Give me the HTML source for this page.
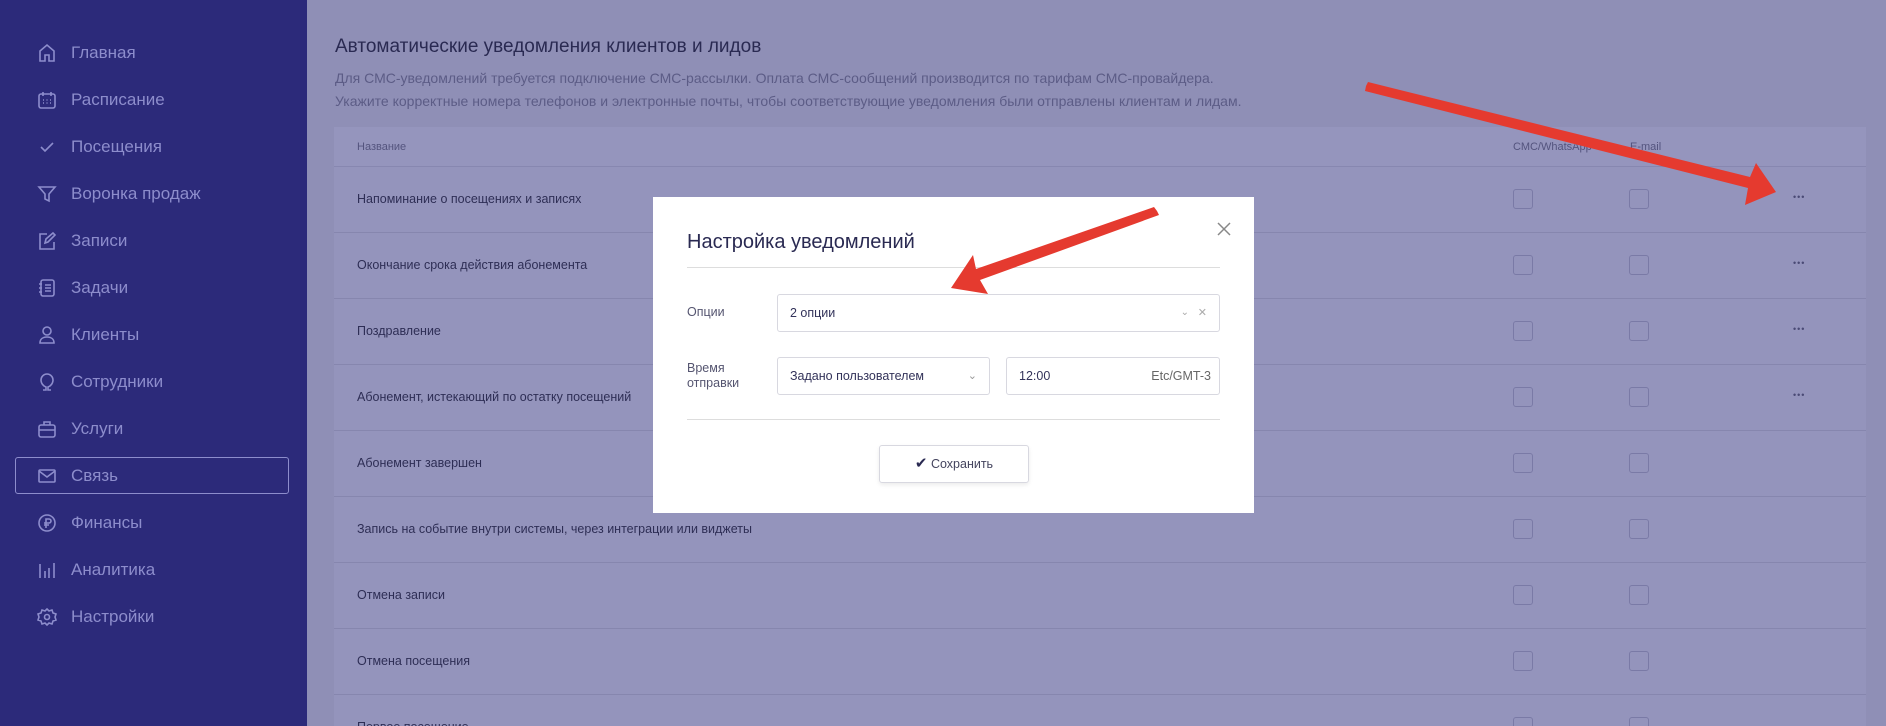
<!DOCTYPE html>
<html><head><meta charset="utf-8"><style>
*{margin:0;padding:0;box-sizing:border-box}
html{width:1886px;height:726px;overflow:hidden}
body{width:1886px;height:726px;overflow:hidden;background:#8f8fb6;font-family:"Liberation Sans","DejaVu Sans",sans-serif;position:relative}
.sb{position:absolute;left:0;top:0;width:307px;height:726px;background:#2c2a7a}
.it{position:absolute;left:0;height:30px;width:307px;color:#8d8dcc;font-size:17px;line-height:30px}
.it span{position:absolute;left:71px}
.it svg{position:absolute;left:37px;top:5px}
.act{position:absolute;left:15px;top:457px;width:274px;height:37px;border:1px solid #8d8dcc;border-radius:3px}
.t1{position:absolute;left:335px;top:36px;font-size:19px;color:#2a2a52}
.d{position:absolute;left:335px;font-size:14px;color:#5c5c86}
.tbl{position:absolute;left:334px;top:127px;width:1532px;height:599px;background:#9494bc;overflow:hidden}
.hd{position:absolute;left:0;top:0;width:1532px;height:40px;background:#9595bd;border-bottom:1px solid #8787b0}
.hd span{position:absolute;top:14px;font-size:11px;color:#54547e}
.row{position:absolute;left:0;width:1532px;height:66px;border-bottom:1px solid #8686ae}
.row .n{position:absolute;left:23px;top:25px;font-size:12.5px;color:#2e2e55}
.cb{position:absolute;top:22px;width:20px;height:20px;border:1px solid #7a7aa6;border-radius:3px}
.dots{position:absolute;left:1459px;top:25px;font-size:9px;color:#4a4a75;letter-spacing:1px}
.modal{position:absolute;left:653px;top:197px;width:601px;height:316px;background:#fff}
.m{position:absolute}
.inp{position:absolute;border:1px solid #d8d8e0;border-radius:3px;height:38px;font-size:12.5px;color:#33335a;line-height:36px;padding-left:12px}
</style></head><body>
<div class="sb">
<div class="act"></div>
<div class="it" style="top:38px"><svg width="20" height="20" viewBox="0 0 20 20" fill="none" stroke="#8d8dcc" stroke-width="1.6"><path d="M3 18V8l7-6 7 6v10h-5v-6H8v6z"/></svg><span>Главная</span></div>
<div class="it" style="top:85px"><svg width="20" height="20" viewBox="0 0 20 20" fill="none" stroke="#8d8dcc" stroke-width="1.6"><rect x="2" y="4" width="16" height="14" rx="2"/><path d="M6 2v4M14 2v4M6 10h1M9.5 10h1M13 10h1M6 13h1M9.5 13h1M13 13h1"/></svg><span>Расписание</span></div>
<div class="it" style="top:132px"><svg width="20" height="20" viewBox="0 0 20 20" fill="none" stroke="#8d8dcc" stroke-width="1.6"><path d="M4 10l4 4 8-8"/></svg><span>Посещения</span></div>
<div class="it" style="top:179px"><svg width="20" height="20" viewBox="0 0 20 20" fill="none" stroke="#8d8dcc" stroke-width="1.6"><path d="M2 3h16l-6 7v7l-4-2v-5z"/></svg><span>Воронка продаж</span></div>
<div class="it" style="top:226px"><svg width="20" height="20" viewBox="0 0 20 20" fill="none" stroke="#8d8dcc" stroke-width="1.6"><path d="M10 3H3v15h14v-7M8 12l1-4 7-6 2 2-7 7z"/></svg><span>Записи</span></div>
<div class="it" style="top:273px"><svg width="20" height="20" viewBox="0 0 20 20" fill="none" stroke="#8d8dcc" stroke-width="1.6"><rect x="4" y="2" width="13" height="16" rx="2"/><path d="M2 6h3M2 10h3M2 14h3M8 7h6M8 10h6M8 13h6"/></svg><span>Задачи</span></div>
<div class="it" style="top:320px"><svg width="20" height="20" viewBox="0 0 20 20" fill="none" stroke="#8d8dcc" stroke-width="1.6"><circle cx="10" cy="6" r="4"/><path d="M3 18c0-4 3-6 7-6s7 2 7 6z"/></svg><span>Клиенты</span></div>
<div class="it" style="top:367px"><svg width="20" height="20" viewBox="0 0 20 20" fill="none" stroke="#8d8dcc" stroke-width="1.6"><path d="M6 18h3v-3c-3-1-5-4-5-7a6 6 0 0112 0c0 3-2 6-5 7v3h3"/></svg><span>Сотрудники</span></div>
<div class="it" style="top:414px"><svg width="20" height="20" viewBox="0 0 20 20" fill="none" stroke="#8d8dcc" stroke-width="1.6"><rect x="2" y="6" width="16" height="12" rx="2"/><path d="M7 6V3h6v3M2 11h16"/></svg><span>Услуги</span></div>
<div class="it" style="top:461px"><svg width="20" height="20" viewBox="0 0 20 20" fill="none" stroke="#8d8dcc" stroke-width="1.6"><rect x="2" y="4" width="16" height="12" rx="1"/><path d="M2 5l8 6 8-6"/></svg><span>Связь</span></div>
<div class="it" style="top:508px"><svg width="20" height="20" viewBox="0 0 20 20" fill="none" stroke="#8d8dcc" stroke-width="1.6"><circle cx="10" cy="10" r="8"/><path d="M9 15V6h3a2 2 0 010 4H7M7 12h5"/></svg><span>Финансы</span></div>
<div class="it" style="top:555px"><svg width="20" height="20" viewBox="0 0 20 20" fill="none" stroke="#8d8dcc" stroke-width="1.6"><path d="M3 4v14M8 11v7M12 8v10M17 3v15"/></svg><span>Аналитика</span></div>
<div class="it" style="top:602px"><svg width="20" height="20" viewBox="0 0 20 20" fill="none" stroke="#8d8dcc" stroke-width="1.6"><path d="M10 2l2 2 3-1 1 3 3 1-1 3 1 3-3 1-1 3-3-1-2 2-2-2-3 1-1-3-3-1 1-3-1-3 3-1 1-3 3 1z"/><circle cx="10" cy="10" r="2.5"/></svg><span>Настройки</span></div>
</div>

<div class="t1">Автоматические уведомления клиентов и лидов</div>
<div class="d" style="top:70px">Для СМС-уведомлений требуется подключение СМС-рассылки. Оплата СМС-сообщений производится по тарифам СМС-провайдера.</div>
<div class="d" style="top:93px">Укажите корректные номера телефонов и электронные почты, чтобы соответствующие уведомления были отправлены клиентам и лидам.</div>

<div class="tbl">
<div class="hd"><span style="left:23px">Название</span><span style="left:1179px">СМС/WhatsApp</span><span style="left:1296px">E-mail</span></div>
<div class="row" style="top:40px"><div class="n">Напоминание о посещениях и записях</div><div class="cb" style="left:1179px"></div><div class="cb" style="left:1295px"></div><div class="dots">•••</div></div>
<div class="row" style="top:106px"><div class="n">Окончание срока действия абонемента</div><div class="cb" style="left:1179px"></div><div class="cb" style="left:1295px"></div><div class="dots">•••</div></div>
<div class="row" style="top:172px"><div class="n">Поздравление</div><div class="cb" style="left:1179px"></div><div class="cb" style="left:1295px"></div><div class="dots">•••</div></div>
<div class="row" style="top:238px"><div class="n">Абонемент, истекающий по остатку посещений</div><div class="cb" style="left:1179px"></div><div class="cb" style="left:1295px"></div><div class="dots">•••</div></div>
<div class="row" style="top:304px"><div class="n">Абонемент завершен</div><div class="cb" style="left:1179px"></div><div class="cb" style="left:1295px"></div></div>
<div class="row" style="top:370px"><div class="n">Запись на событие внутри системы, через интеграции или виджеты</div><div class="cb" style="left:1179px"></div><div class="cb" style="left:1295px"></div></div>
<div class="row" style="top:436px"><div class="n">Отмена записи</div><div class="cb" style="left:1179px"></div><div class="cb" style="left:1295px"></div></div>
<div class="row" style="top:502px"><div class="n">Отмена посещения</div><div class="cb" style="left:1179px"></div><div class="cb" style="left:1295px"></div></div>
<div class="row" style="top:568px"><div class="n">Первое посещение</div><div class="cb" style="left:1179px"></div><div class="cb" style="left:1295px"></div></div>
</div>

<div class="modal">
<div class="m" style="left:34px;top:34px;font-size:20px;color:#2a2a52">Настройка уведомлений</div>
<svg class="m" style="left:563px;top:24px" width="16" height="16" viewBox="0 0 16 16" stroke="#888" stroke-width="1.5"><path d="M2 2l12 12M14 2L2 14"/></svg>
<div class="m" style="left:34px;top:70px;width:533px;height:1px;background:#ddd"></div>
<div class="m" style="left:34px;top:108px;font-size:12.5px;color:#555570">Опции</div>
<div class="inp" style="left:124px;top:97px;width:443px">2 опции<span style="position:absolute;right:30px;color:#aaa;font-size:10px">⌄</span><span style="position:absolute;right:12px;color:#aaa;font-size:11px">✕</span></div>
<div class="m" style="left:34px;top:164px;font-size:12.5px;color:#555570;line-height:15px">Время<br>отправки</div>
<div class="inp" style="left:124px;top:160px;width:213px">Задано пользователем<span style="position:absolute;right:12px;color:#999;font-size:11px">⌄</span></div>
<div class="inp" style="left:353px;top:160px;width:214px">12:00<span style="position:absolute;right:8px;color:#666">Etc/GMT-3</span></div>
<div class="m" style="left:34px;top:222px;width:533px;height:1px;background:#ddd"></div>
<div class="inp" style="left:226px;top:248px;width:150px;padding:0;text-align:center;color:#44445e;box-shadow:0 2px 4px rgba(0,0,0,.08)"><span style="color:#2a2a52;font-size:15px">✔</span> Сохранить</div>
</div>

<svg style="position:absolute;left:0;top:0" width="1886" height="726">
<g fill="#e53a2f">
<polygon points="1366,86 1368,82 1750,177 1756,163 1776,192 1745,205 1748,188 1365,91"/>
<polygon points="1157,211 1159,215 980,280 988,294 951,288 973,255 976,269 1154,207"/>
</g>
</svg>
</body></html>
